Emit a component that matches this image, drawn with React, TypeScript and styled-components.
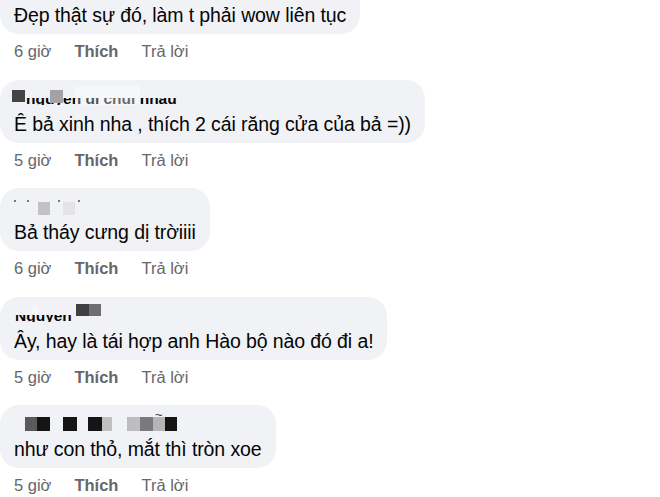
import styled, { createGlobalStyle } from "styled-components";

type Block = { left: number; top: number; w: number; h: number; color: string };

type Comment = {
  id: number;
  name?: string;
  nameOffset?: number;
  blocks: Block[];
  text: string;
  time: string;
};

const comments: Comment[] = [
  {
    id: 1,
    blocks: [],
    text: "Đẹp thật sự đó, làm t phải wow liên tục",
    time: "6 giờ",
  },
  {
    id: 2,
    name: "nguyen di chui nhau",
    nameOffset: 12,
    blocks: [
      { left: 61, top: -2, w: 25, h: 19, color: "rgba(255,255,255,0.3)" },
      { left: 86, top: -2, w: 40, h: 19, color: "rgba(255,255,255,0.4)" },
      { left: -2, top: 2, w: 13, h: 12, color: "#444446" },
      { left: 36, top: 2, w: 13, h: 13, color: "#a3a3a5" },
    ],
    text: "Ê bả xinh nha , thích 2 cái răng cửa của bả =))",
    time: "5 giờ",
  },
  {
    id: 3,
    blocks: [
      { left: 0, top: 4, w: 2, h: 2, color: "#777" },
      { left: 13, top: 4, w: 2, h: 2, color: "#777" },
      { left: 24, top: 6, w: 12, h: 13, color: "#c2c2c4" },
      { left: 44, top: 4, w: 2, h: 2, color: "#777" },
      { left: 49, top: 6, w: 12, h: 13, color: "#e4e4e6" },
      { left: 64, top: 4, w: 2, h: 2, color: "#777" },
    ],
    text: "Bả tháy cưng dị trờiiii",
    time: "6 giờ",
  },
  {
    id: 4,
    name: "Nguyen",
    nameOffset: 1,
    blocks: [
      { left: 18, top: 0, w: 6, h: 9, color: "rgba(255,255,255,0.4)" },
      { left: 62, top: -1, w: 13, h: 12, color: "#404042" },
      { left: 75, top: -1, w: 12, h: 12, color: "#6e6e70" },
    ],
    text: "Ây, hay là tái hợp anh Hào bộ nào đó đi a!",
    time: "5 giờ",
  },
  {
    id: 5,
    blocks: [
      { left: 11, top: 4, w: 12, h: 14, color: "#5a5a5c" },
      { left: 23, top: 4, w: 13, h: 14, color: "#141414" },
      { left: 49, top: 4, w: 14, h: 14, color: "#141414" },
      { left: 74, top: 4, w: 14, h: 14, color: "#141414" },
      { left: 88, top: 4, w: 10, h: 14, color: "#c0c0c2" },
      { left: 113, top: 4, w: 13, h: 14, color: "#bdbdbf" },
      { left: 126, top: 4, w: 13, h: 14, color: "#7a7a7c" },
      { left: 139, top: 4, w: 12, h: 14, color: "#b5b5b7" },
      { left: 151, top: 4, w: 12, h: 14, color: "#141414" },
    ],
    text: "như con thỏ, mắt thì tròn xoe",
    time: "5 giờ",
  },
];

export default function App() {
  return (
    <>
      <GlobalStyle />
      <List>
        {comments.map((c) => (
          <Item key={c.id}>
            <Bubble>
              <NameRow>
                {c.name && (
                  <NameClip $offset={c.nameOffset ?? 0}>
                    <NameText>{c.name}</NameText>
                  </NameClip>
                )}
                {c.blocks.map((b, i) => (
                  <Censor
                    key={i}
                    style={{
                      left: b.left,
                      top: b.top,
                      width: b.w,
                      height: b.h,
                      background: b.color,
                    }}
                  />
                ))}
                {c.id === 5 && <Tilde>~</Tilde>}
              </NameRow>
              <Body>{c.text}</Body>
            </Bubble>
            <Meta>
              <Time>{c.time}</Time>
              <Action $bold>Thích</Action>
              <Action>Trả lời</Action>
            </Meta>
          </Item>
        ))}
      </List>
    </>
  );
}

const GlobalStyle = createGlobalStyle`
  html, body {
    margin: 0;
    padding: 0;
    background: #ffffff;
    overflow: hidden;
  }
  body {
    font-family: "Liberation Sans", Arial, sans-serif;
    -webkit-font-smoothing: antialiased;
  }
`;

const List = styled.div`
  display: flex;
  flex-direction: column;
  margin-top: -29px;
`;

const Item = styled.div`
  display: flex;
  flex-direction: column;
  align-items: flex-start;
`;

const Bubble = styled.div`
  background: #f0f2f5;
  border-radius: 19px;
  padding: 8px 14px 7px 14px;
  display: flex;
  flex-direction: column;
`;

const NameRow = styled.div`
  position: relative;
  height: 24px;
  padding-top: 10px;
  box-sizing: border-box;
`;

const NameClip = styled.span<{ $offset: number }>`
  display: block;
  height: 7px;
  overflow: hidden;
  margin-left: ${({ $offset }) => $offset}px;
`;

const NameText = styled.span`
  display: block;
  margin-top: -7px;
  font-size: 15.5px;
  line-height: 15px;
  font-weight: 700;
  color: #050505;
  white-space: nowrap;
`;

const Censor = styled.span`
  position: absolute;
`;

const Tilde = styled.span`
  position: absolute;
  left: 141px;
  top: -6px;
  font-size: 13px;
  color: #333;
`;

const Body = styled.div`
  font-size: 19.5px;
  line-height: 24px;
  color: #050505;
  white-space: nowrap;
  letter-spacing: -0.1px;
`;

const Meta = styled.div`
  display: flex;
  gap: 23px;
  padding: 7px 0 18.5px 14px;
  font-size: 16.5px;
  line-height: 20px;
  color: #65676b;
`;

const Time = styled.span``;

const Action = styled.span<{ $bold?: boolean }>`
  font-weight: ${({ $bold }) => ($bold ? 700 : 400)};
`;
